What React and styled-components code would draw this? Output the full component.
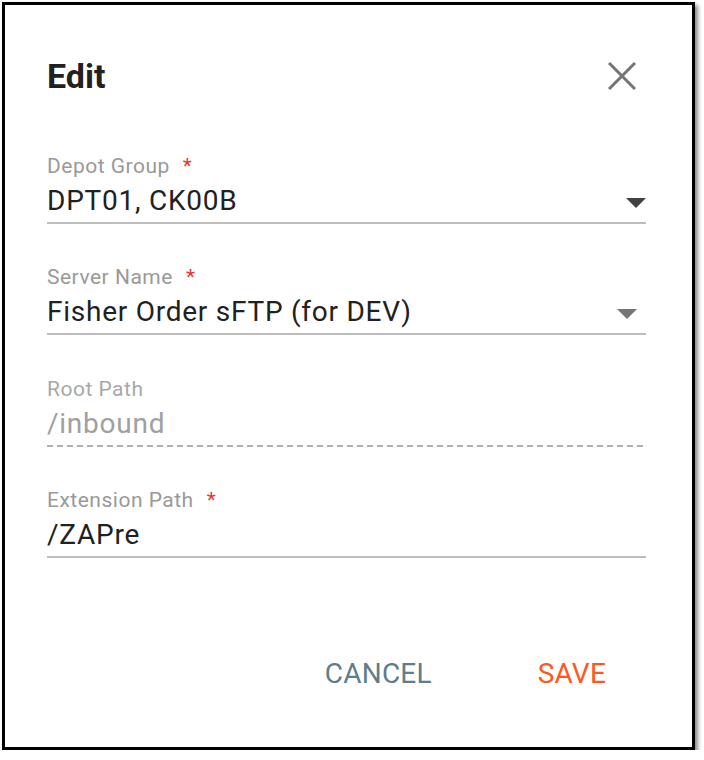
import React from 'react';
import styled, { createGlobalStyle } from 'styled-components';

const GlobalStyle = createGlobalStyle`
	html, body {
		margin: 0;
		padding: 0;
		background: #ffffff;
	}
	body {
		font-family: Roboto, "Liberation Sans", Arial, sans-serif;
	}
`;

const Dialog = styled.div`
	box-sizing: border-box;
	margin: 2px 0 0 2px;
	width: 693px;
	height: 748px;
	border: 3px solid #000;
	background: #fff;
	box-shadow: 3px 3px 4px rgba(0, 0, 0, 0.45);
	padding: 54px 46px 0 42px;
	display: flex;
	flex-direction: column;
`;

const Header = styled.div`
	display: flex;
	align-items: center;
	justify-content: space-between;
	height: 34px;
	margin-bottom: 63px;
`;

const Title = styled.h2`
	margin: 0;
	font-size: 34px;
	line-height: 34px;
	font-weight: 700;
	color: #212121;
`;

const CloseButton = styled.button`
	border: 0;
	background: none;
	padding: 0;
	margin-right: 10px;
	width: 28px;
	height: 28px;
	display: flex;
	align-items: center;
	justify-content: center;
	cursor: pointer;
`;

const Fields = styled.div`
	display: flex;
	flex-direction: column;
	gap: 43.3px;
`;

const Field = styled.div`
	display: flex;
	flex-direction: column;
`;

const Label = styled.label`
	font-size: 21px;
	line-height: 21px;
	letter-spacing: 0.5px;
	color: ${(p) => (p.disabled ? '#a8a8a8' : '#999999')};
`;

const Required = styled.span`
	color: #e53935;
	margin-left: 13px;
`;

const ValueRow = styled.div`
	margin-top: 10px;
	padding-bottom: 7px;
	border-bottom: 2px solid #bdbdbd;
	${(p) =>
		p.disabled &&
		`
		border-bottom: 0;
		background-image: linear-gradient(to right, #b0b0b0 6px, transparent 6px);
		background-size: 10px 2px;
		background-repeat: repeat-x;
		background-position: left bottom;
		padding-bottom: 9px;
	`}
	display: flex;
	align-items: center;
	justify-content: space-between;
`;

const Value = styled.span`
	font-size: 28px;
	line-height: 28px;
	letter-spacing: 0.75px;
	color: ${(p) => (p.disabled ? '#a0a0a0' : '#212121')};
`;

const Arrow = styled.span`
	width: 0;
	height: 0;
	border-left: 10px solid transparent;
	border-right: 10px solid transparent;
	border-top: 10px solid ${(p) => p.color};
	margin-right: ${(p) => p.offset}px;
	margin-top: 4px;
`;

const Actions = styled.div`
	margin-top: auto;
	margin-bottom: 51px;
	display: flex;
	justify-content: flex-end;
	gap: 106px;
	padding-right: 40px;
`;

const ActionButton = styled.button`
	border: 0;
	background: none;
	padding: 8px 24px;
	margin: 0 -24px;
	font-family: Roboto, "Liberation Sans", Arial, sans-serif;
	font-size: 28px;
	line-height: 28px;
	letter-spacing: 0.2px;
	text-transform: uppercase;
	color: ${(p) => p.color};
	cursor: pointer;
`;

function CloseIcon() {
	return (
		<svg width="28" height="28" viewBox="0 0 28 28">
			<path d="M1 1 L27 27 M27 1 L1 27" stroke="#757575" strokeWidth="3" />
		</svg>
	);
}

export default function App() {
	return (
		<>
			<GlobalStyle />
			<Dialog>
				<Header>
					<Title>Edit</Title>
					<CloseButton aria-label="close">
						<CloseIcon />
					</CloseButton>
				</Header>
				<Fields>
					<Field>
						<Label>Depot Group<Required>*</Required></Label>
						<ValueRow>
							<Value>DPT01, CK00B</Value>
							<Arrow color="#424242" offset={0} />
						</ValueRow>
					</Field>
					<Field>
						<Label>Server Name<Required>*</Required></Label>
						<ValueRow>
							<Value>Fisher Order sFTP (for DEV)</Value>
							<Arrow color="#757575" offset={9} />
						</ValueRow>
					</Field>
					<Field>
						<Label disabled>Root Path</Label>
						<ValueRow disabled>
							<Value disabled>/inbound</Value>
						</ValueRow>
					</Field>
					<Field>
						<Label>Extension Path<Required>*</Required></Label>
						<ValueRow>
							<Value>/ZAPre</Value>
						</ValueRow>
					</Field>
				</Fields>
				<Actions>
					<ActionButton color="#607d8b">Cancel</ActionButton>
					<ActionButton color="#ff5722">Save</ActionButton>
				</Actions>
			</Dialog>
		</>
	);
}
